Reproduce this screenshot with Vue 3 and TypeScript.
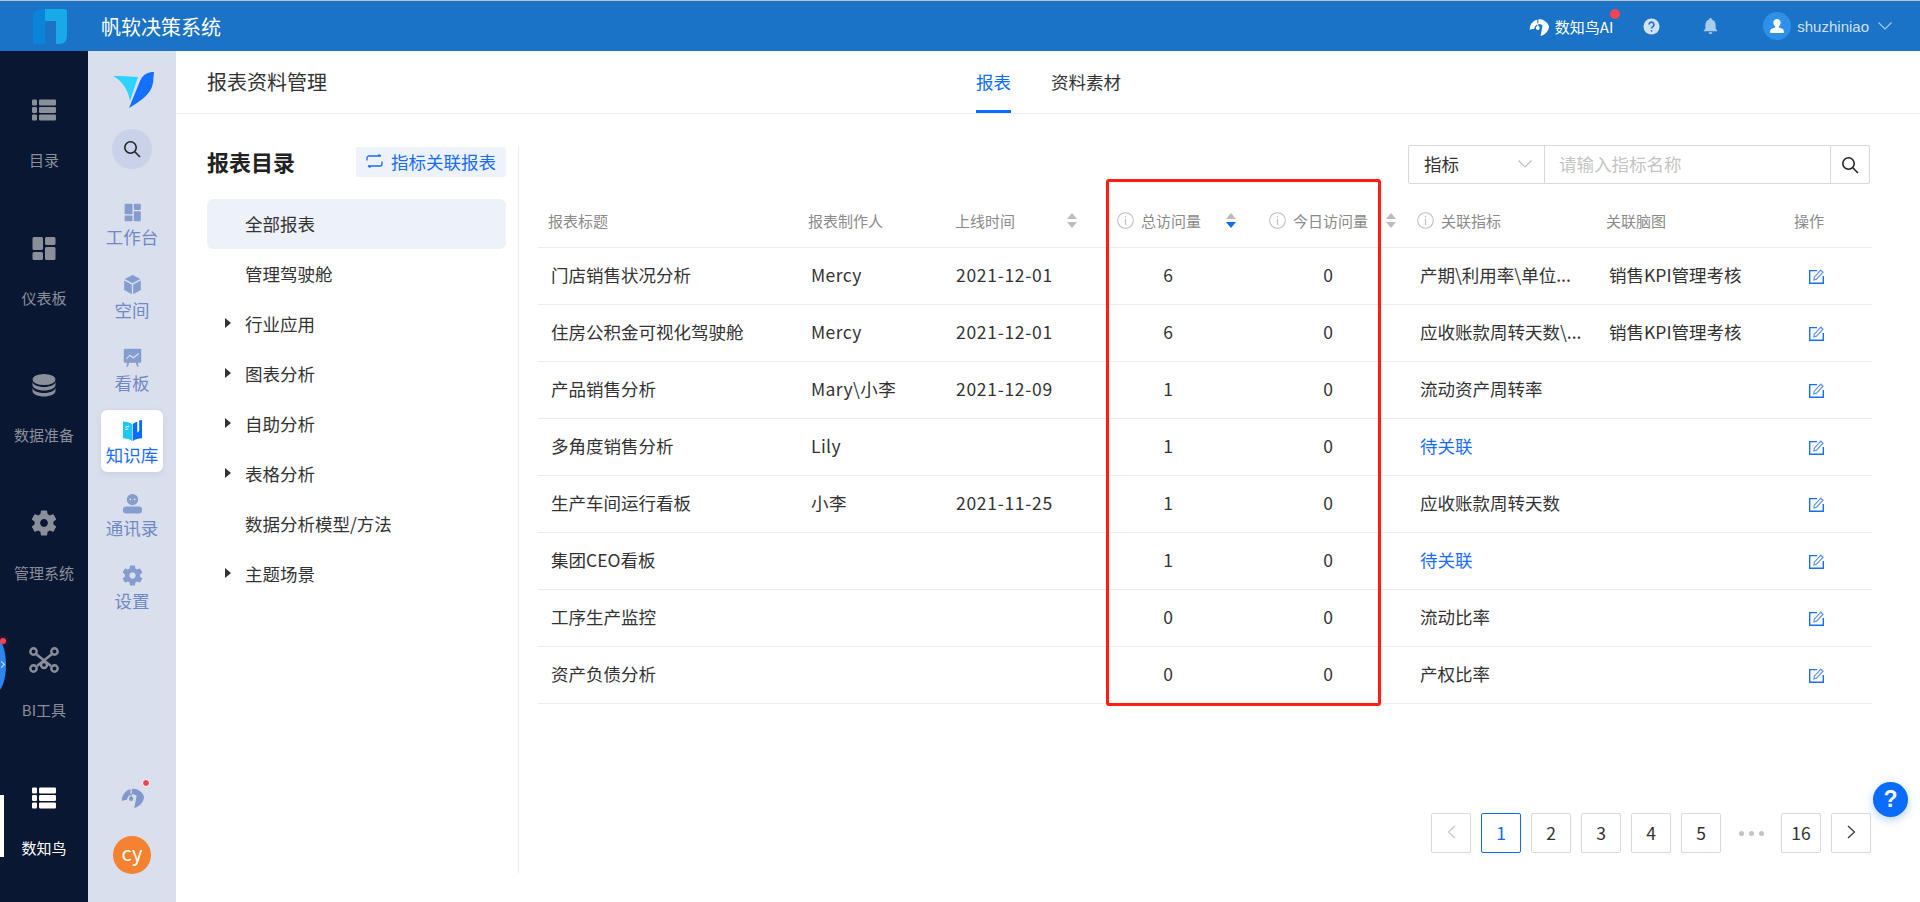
<script setup lang="ts">
function rr(x: number, y: number, w: number, h: number, r: number): string {
  return `M${x + r} ${y}h${w - 2 * r}a${r} ${r} 0 0 1 ${r} ${r}v${h - 2 * r}a${r} ${r} 0 0 1-${r} ${r}h-${w - 2 * r}a${r} ${r} 0 0 1-${r}-${r}v-${h - 2 * r}a${r} ${r} 0 0 1 ${r}-${r}z`
}

const gear =
  'M19.14 12.94c.04-.3.06-.61.06-.94 0-.32-.02-.64-.07-.94l2.03-1.58c.18-.14.23-.41.12-.61l-1.92-3.32c-.12-.22-.37-.29-.59-.22l-2.39.96c-.5-.38-1.03-.7-1.62-.94l-.36-2.54c-.04-.24-.24-.41-.48-.41h-3.84c-.24 0-.43.17-.47.41l-.36 2.54c-.59.24-1.13.57-1.62.94l-2.39-.96c-.22-.08-.47 0-.59.22L2.74 8.87c-.12.21-.08.47.12.61l2.03 1.58c-.05.3-.09.63-.09.94s.02.64.07.94l-2.03 1.58c-.18.14-.23.41-.12.61l1.92 3.32c.12.22.37.29.59.22l2.39-.96c.5.38 1.03.7 1.62.94l.36 2.54c.05.24.24.41.48.41h3.84c.24 0 .44-.17.47-.41l.36-2.54c.59-.24 1.13-.56 1.62-.94l2.39.96c.22.08.47 0 .59-.22l1.92-3.32c.12-.22.07-.47-.12-.61l-2.01-1.58zM12 15c-1.65 0-3-1.35-3-3s1.35-3 3-3 3 1.35 3 3-1.35 3-3 3z'

const listIcon = [1.5, 9, 16.5].map((y) => rr(0, y, 5, 6, 1.2) + rr(7, y, 17, 6, 1.2)).join('')
const dashIcon = rr(0.5, 1, 10.5, 13, 1.5) + rr(0.5, 16, 10.5, 8, 1.5) + rr(13, 1, 10.5, 8, 1.5) + rr(13, 11, 10.5, 13, 1.5)
const dbIcon =
  'M.5 6.5a11.5 5.5 0 1 0 23 0a11.5 5.5 0 1 0-23 0z' +
  'M.5 8.5v3.5c0 3 5.1 5.5 11.5 5.5s11.5-2.5 11.5-5.5v-3.5c0 3-5.1 5.5-11.5 5.5S.5 11.5.5 8.5z' +
  'M.5 14.5v3.5c0 3 5.1 5.5 11.5 5.5s11.5-2.5 11.5-5.5v-3.5c0 3-5.1 5.5-11.5 5.5S.5 17.5.5 14.5z'

const birdMark = 'M.6 14A10 10 0 0 1 20 10c0 5-4 9-8.500 10L13.500 10C12.500 7.500 7 6.500 5 13c-1.500 0-3.500.3-4.400 1z'

const primaryNav = [
  { label: '目录', d: listIcon, vb: '0 0 24 24' },
  { label: '仪表板', d: dashIcon, vb: '0 0 24 24' },
  { label: '数据准备', d: dbIcon, vb: '0 0 24 24' },
  { label: '管理系统', d: gear, vb: '2.300 2 19.400 20', big: true },
  { label: 'BI工具', d: '', vb: '' },
  { label: '数知鸟', d: listIcon, vb: '0 0 24 24', active: true },
]

const secondaryNav = [
  { label: '工作台', d: rr(3, 2, 9, 12, 1.2) + rr(3, 15.5, 9, 6.5, 1.2) + rr(13.5, 2, 8, 7, 1.2) + rr(13.5, 10.5, 8, 11.5, 1.2), vb: '0 0 24 24' },
  { label: '空间', d: 'M12 1l9 4.8-9 4.7-9-4.7zM2.5 7.5l8.7 4.6V23l-8.7-4.8zM21.5 7.5l-8.7 4.6V23l8.7-4.8z', vb: '0 0 24 24' },
  { label: '看板', d: rr(2, 2, 20, 16, 1.5) + 'M5 12.5l4-4 4 3 6-5v1.8l-6 5-4-3-4 4zM6 18h2.2L6.8 22.5H5zM15.8 18H18l1 4.5h-1.8z', vb: '0 0 24 24' },
  { label: '知识库', d: '', vb: '', active: true },
  { label: '通讯录', d: 'M12 1a6.5 6.5 0 1 1 0 13 6.5 6.5 0 0 1 0-13zM9.6 6.3a1 1 0 1 0 0 2 1 1 0 0 0 0-2zM14.4 6.3a1 1 0 1 0 0 2 1 1 0 0 0 0-2z' + rr(1, 15.5, 22, 8, 4), vb: '0 0 24 24' },
  { label: '设置', d: gear, vb: '2 2 20 20' },
]

const catalog = [
  { label: '全部报表', active: true },
  { label: '管理驾驶舱' },
  { label: '行业应用', caret: true },
  { label: '图表分析', caret: true },
  { label: '自助分析', caret: true },
  { label: '表格分析', caret: true },
  { label: '数据分析模型/方法' },
  { label: '主题场景', caret: true },
]

const rows = [
  { title: '门店销售状况分析', owner: 'Mercy', date: '2021-12-01', total: 6, today: 0, metric: '产期\\利用率\\单位...', map: '销售KPI管理考核' },
  { title: '住房公积金可视化驾驶舱', owner: 'Mercy', date: '2021-12-01', total: 6, today: 0, metric: '应收账款周转天数\\...', map: '销售KPI管理考核' },
  { title: '产品销售分析', owner: 'Mary\\小李', date: '2021-12-09', total: 1, today: 0, metric: '流动资产周转率', map: '' },
  { title: '多角度销售分析', owner: 'Lily', date: '', total: 1, today: 0, metric: '待关联', map: '', pending: true },
  { title: '生产车间运行看板', owner: '小李', date: '2021-11-25', total: 1, today: 0, metric: '应收账款周转天数', map: '' },
  { title: '集团CEO看板', owner: '', date: '', total: 1, today: 0, metric: '待关联', map: '', pending: true },
  { title: '工序生产监控', owner: '', date: '', total: 0, today: 0, metric: '流动比率', map: '' },
  { title: '资产负债分析', owner: '', date: '', total: 0, today: 0, metric: '产权比率', map: '' },
]

const pages = ['1', '2', '3', '4', '5']
</script>

<template>
  <div class="app">
    <header class="topbar">
      <svg class="brand" viewBox="0 0 34 35">
        <path d="M12 0H9C3.500 0 0 3.500 0 9v26h12z" fill="#0a84d8" />
        <path d="M12 0h20a2 2 0 0 1 2 2v25c0 5-3 8-8 8h-3V12H12z" fill="#19a9e8" />
      </svg>
      <span class="brand-name">帆软决策系统</span>
      <div class="top-actions">
        <div class="ai">
          <svg class="ai-icon" viewBox="0 0 20 20">
            <path :d="birdMark" fill="#fff" />
            <circle cx="8.800" cy="12" r="1.900" fill="#fff" />
            <path d="M8.800 7.500V0" stroke="#1a73c7" stroke-width="1.100" />
            <path d="M8.800 12V7.500" stroke="#fff" stroke-width="1" />
          </svg>
          <span>数知鸟AI</span>
          <i class="ai-dot"></i>
        </div>
        <svg class="help" viewBox="0 0 18 18">
          <circle cx="9" cy="9" r="8.500" fill="#cfe2f6" />
          <path d="M6.400 7a2.600 2.600 0 1 1 4 2.200c-.9.6-1.400 1-1.400 2" fill="none" stroke="#1a73c7" stroke-width="1.700" />
          <circle cx="9" cy="13.600" r="1" fill="#1a73c7" />
        </svg>
        <svg class="bell" viewBox="0 0 16 18">
          <path d="M8 0a1.400 1.400 0 0 1 1.400 1.500C12 2.200 13.500 4.500 13.500 7.500v3.500L15.500 14H.5l2-3V7.500C2.500 4.500 4 2.200 6.600 1.500A1.400 1.400 0 0 1 8 0zM6 15h4a2 2 0 0 1-4 0z" fill="#a9cbec" />
        </svg>
        <div class="avatar">
          <svg viewBox="0 0 16 16"><path d="M8 1a3.600 3.600 0 0 1 3.600 3.800c0 1.600-.8 3-1.800 3.700v1c2.500.5 5 1.500 5 3.300V15H1.200v-2.200c0-1.800 2.500-2.800 5-3.300v-1c-1-.7-1.800-2.100-1.800-3.700A3.600 3.600 0 0 1 8 1z" fill="#fff" /></svg>
        </div>
        <span class="username">shuzhiniao</span>
        <svg class="user-chevron" viewBox="0 0 14 8"><path d="M.5.5L7 7l6.500-6.500" fill="none" stroke="#a9cbec" stroke-width="1.100" /></svg>
      </div>
    </header>

    <div class="body">
      <nav class="rail-primary">
        <div class="handle"><i class="handle-chevron"></i></div>
        <i class="handle-dot"></i>
        <a v-for="item in primaryNav" :key="item.label" class="rail-item" :class="{ active: item.active }">
          <i v-if="item.active" class="rail-marker"></i>
          <svg v-if="item.d" class="rail-icon" :class="{ big: item.big }" :viewBox="item.vb"><path :d="item.d" fill="currentColor" fill-rule="evenodd" /></svg>
          <svg v-else class="rail-icon net" viewBox="0 0 30 26" fill="none" stroke="currentColor" stroke-width="2.400">
            <circle cx="4.500" cy="4.500" r="3.200" />
            <circle cx="25.500" cy="4.500" r="3.200" />
            <circle cx="4.500" cy="21.500" r="3.200" />
            <circle cx="25.500" cy="21.500" r="3.200" />
            <circle cx="15" cy="18" r="3" />
            <path d="M7 7l15 12M23 7L8 19" />
          </svg>
          <span>{{ item.label }}</span>
        </a>
      </nav>

      <nav class="rail-secondary">
        <svg class="bird" viewBox="0 0 41 37">
          <path d="M0 5c8 0 18 .5 25 1l-8 24C15 18 9 10 0 5z" fill="#2dd2ff" />
          <path d="M41 1l-1 11c-2 12-14 19-24 25l11-27c3-7 8-9 14-9z" fill="#1670ff" />
        </svg>
        <button class="rail-search" type="button" aria-label="搜索">
          <svg viewBox="0 0 18 18" fill="none" stroke="#222" stroke-width="1.600"><circle cx="7.500" cy="7.500" r="5.700" /><path d="M11.800 11.800L17 17" /></svg>
        </button>
        <div class="side-list">
          <a v-for="item in secondaryNav" :key="item.label" class="side-item" :class="{ active: item.active }">
            <svg v-if="item.active" class="side-icon" viewBox="2 2 20 22">
              <path d="M2 3.500c3.500 0 7 1 9.700 2.700V24C9 22 5.500 21 2 21z" fill="#1dc8f7" />
              <path d="M12.300 6.200C14 5 15.500 4.200 17 3.800V15l2-1.500V2.500l3-.5v19c-3.500 0-7 1-9.700 3z" fill="#0a6cff" />
              <path d="M4.500 9.500l4-1M4.500 12l3-.8" stroke="#fff" stroke-width="1" />
            </svg>
            <svg v-else class="side-icon" :viewBox="item.vb"><path :d="item.d" fill="currentColor" fill-rule="evenodd" /></svg>
            <span>{{ item.label }}</span>
          </a>
        </div>
        <div class="side-ai">
          <svg viewBox="0 0 20 20">
            <path :d="birdMark" fill="#8298cc" />
            <circle cx="8.800" cy="12" r="1.900" fill="#8298cc" />
            <path d="M8.800 7.500V0" stroke="#dadfee" stroke-width="1.100" />
            <path d="M8.800 12V7.500" stroke="#8298cc" stroke-width="1" />
          </svg>
          <i></i>
        </div>
        <div class="side-avatar">cy</div>
      </nav>

      <main class="main">
        <div class="page-head">
          <h1>报表资料管理</h1>
          <div class="tabs">
            <a class="tab active">报表</a>
            <a class="tab">资料素材</a>
          </div>
        </div>

        <div class="content">
          <aside class="catalog">
            <div class="catalog-head">
              <h2>报表目录</h2>
              <button class="link-btn" type="button">
                <svg viewBox="0 0 17 14" fill="none" stroke="#1a6cff" stroke-width="1.300">
                  <path d="M1 6.500V4a2 2 0 0 1 2-2h12M12.500.5L15 2M16 7.500V10a2 2 0 0 1-2 2H2M4.500 13.500L2 12" />
                </svg>
                <span>指标关联报表</span>
              </button>
            </div>
            <ul class="catalog-list">
              <li v-for="item in catalog" :key="item.label" :class="{ active: item.active }">
                <span class="caret-slot"><i v-if="item.caret" class="caret"></i></span>
                {{ item.label }}
              </li>
            </ul>
          </aside>

          <section class="panel">
            <div class="searchbar">
              <div class="search-select">
                <span>指标</span>
                <svg viewBox="0 0 14 8"><path d="M.5.5L7 7l6.500-6.500" fill="none" stroke="#bdbdbd" stroke-width="1.100" /></svg>
              </div>
              <div class="search-input">请输入指标名称</div>
              <button class="search-btn" type="button" aria-label="搜索">
                <svg viewBox="0 0 18 18" fill="none" stroke="#222" stroke-width="1.600"><circle cx="7.500" cy="7.500" r="5.700" /><path d="M11.800 11.800L17 17" /></svg>
              </button>
            </div>

            <div class="table">
              <div class="row head">
                <div class="cell h-title">报表标题</div>
                <div class="cell h-owner">报表制作人</div>
                <div class="cell h-date">
                  上线时间
                  <span class="sort s-date"><i class="up"></i><i class="down"></i></span>
                </div>
                <div class="cell h-total">
                  <svg class="info" viewBox="0 0 17 17"><circle cx="8.500" cy="8.500" r="7.800" /><path d="M8.500 4v1.600M8.500 7v6" /></svg>
                  总访问量
                  <span class="sort s-total"><i class="up"></i><i class="down on"></i></span>
                </div>
                <div class="cell h-today">
                  <svg class="info" viewBox="0 0 17 17"><circle cx="8.500" cy="8.500" r="7.800" /><path d="M8.500 4v1.600M8.500 7v6" /></svg>
                  今日访问量
                  <span class="sort s-today"><i class="up"></i><i class="down"></i></span>
                </div>
                <div class="cell h-metric">
                  <svg class="info" viewBox="0 0 17 17"><circle cx="8.500" cy="8.500" r="7.800" /><path d="M8.500 4v1.600M8.500 7v6" /></svg>
                  关联指标
                </div>
                <div class="cell h-map">关联脑图</div>
                <div class="cell h-op">操作</div>
              </div>
              <div v-for="r in rows" :key="r.title" class="row">
                <div class="cell c-title">{{ r.title }}</div>
                <div class="cell c-owner">{{ r.owner }}</div>
                <div class="cell c-date">{{ r.date }}</div>
                <div class="cell c-total">{{ r.total }}</div>
                <div class="cell c-today">{{ r.today }}</div>
                <div class="cell c-metric" :class="{ pending: r.pending }">{{ r.metric }}</div>
                <div class="cell c-map">{{ r.map }}</div>
                <div class="cell c-op">
                  <svg class="edit" viewBox="0 0 15 15" fill="none">
                    <path d="M8 1.600H.7v12.700h13.600V7" stroke="#1470f5" stroke-width="1.400" />
                    <path d="M4.800 11l.5-2.800L11.800 1.200l2.200 2-6.500 7z" stroke="#5f93f2" stroke-width="1.200" />
                  </svg>
                </div>
              </div>
              <div class="highlight"></div>
            </div>

            <div class="pager">
              <button class="page" type="button" aria-label="上一页">
                <svg viewBox="0 0 9 14"><path d="M8 1L1.500 7 8 13" fill="none" stroke="#c4c4c4" stroke-width="1.200" /></svg>
              </button>
              <button v-for="(p, i) in pages" :key="p" class="page" :class="{ current: i === 0 }" type="button">{{ p }}</button>
              <span class="dots"><i></i><i></i><i></i></span>
              <button class="page" type="button">16</button>
              <button class="page" type="button" aria-label="下一页">
                <svg viewBox="0 0 9 14"><path d="M1 1l6.500 6L1 13" fill="none" stroke="#333" stroke-width="1.200" /></svg>
              </button>
            </div>
          </section>
        </div>
        <button class="float-help" type="button" aria-label="帮助">?</button>
      </main>
    </div>
  </div>
</template>

<style scoped>
.app {
  width: 1920px;
  height: 902px;
  display: flex;
  flex-direction: column;
  overflow: hidden;
  color: #333;
  font-family: "Noto Sans CJK SC", "Liberation Sans", sans-serif;
}
.topbar {
  height: 51px;
  box-sizing: border-box;
  flex: none;
  display: flex;
  align-items: center;
  background: #1a73c7;
  border-top: 1px solid #b9c2ca;
  color: #fff;
  position: relative;
  z-index: 2;
}
.brand { width: 34px; height: 35px; margin-left: 33px; }
.brand-name { margin-left: 34px; font-size: 20px; }
.top-actions { margin-left: auto; display: flex; align-items: center; padding-right: 28px; }
.ai { display: flex; align-items: center; position: relative; font-size: 15px; }
.ai-icon { width: 20px; height: 20px; margin-right: 6px; }
.ai-dot { position: absolute; right: -7px; top: -7px; width: 10px; height: 10px; border-radius: 50%; background: #fa4350; }
.help { width: 17px; height: 17px; margin-left: 30px; }
.bell { width: 15px; height: 17px; margin-left: 43px; }
.avatar { width: 28px; height: 28px; margin-left: 45px; border-radius: 50%; background: #2f90ea; display: flex; align-items: center; justify-content: center; }
.avatar svg { width: 16px; height: 16px; }
.username { margin-left: 6px; font-size: 15px; color: #cfe0f2; font-family: "Liberation Sans", sans-serif; }
.user-chevron { width: 14px; height: 8px; margin-left: 9px; }

.body { flex: 1; display: flex; min-height: 0; }

.rail-primary {
  width: 88px;
  flex: none;
  box-sizing: border-box;
  padding-top: 41px;
  background: #0a1733;
  position: relative;
  overflow: hidden;
}
.rail-item {
  height: 137.5px;
  display: flex;
  flex-direction: column;
  align-items: center;
  position: relative;
  color: #8a8f9a;
  font-size: 15px;
  line-height: 20px;
}
.rail-item.active { color: #fff; }
.rail-icon { width: 24px; height: 24px; margin: 6px 0 28px; }
.rail-icon.big { width: 26px; height: 26px; margin: 5px 0 27px; }
.rail-icon.net { width: 30px; height: 26px; margin: 5px 0 27px; }
.rail-marker { position: absolute; left: 0; top: 15.500px; width: 4px; height: 62px; background: #fff; }
.handle {
  position: absolute;
  left: -14px;
  top: 587px;
  width: 20px;
  height: 54px;
  border-radius: 50%;
  background: #2d86f0;
}
.handle-chevron {
  position: absolute;
  left: 13px;
  top: 24px;
  width: 4px;
  height: 4px;
  border-top: 1px solid #cfe3ff;
  border-right: 1px solid #cfe3ff;
  transform: rotate(45deg);
}
.handle-dot {
  position: absolute;
  left: 0;
  top: 587px;
  width: 6px;
  height: 6px;
  border-radius: 50%;
  background: #f0434f;
  box-shadow: 0 0 5px rgba(240, 67, 79, 0.5);
}

.rail-secondary {
  width: 88px;
  flex: none;
  box-sizing: border-box;
  padding: 20px 0 28px;
  background: #dadfee;
  display: flex;
  flex-direction: column;
  align-items: center;
}
.bird { width: 41px; height: 37px; margin-left: 2px; flex: none; }
.rail-search {
  width: 40px;
  height: 40px;
  margin-top: 21px;
  flex: none;
  padding: 0;
  border: 0;
  border-radius: 50%;
  background: #c9d2e8;
  display: flex;
  align-items: center;
  justify-content: center;
}
.rail-search svg { width: 18px; height: 18px; }
.side-list { margin-top: 23px; display: flex; flex-direction: column; gap: 10.800px; }
.side-item {
  width: 62px;
  height: 62px;
  padding-top: 8px;
  box-sizing: border-box;
  display: flex;
  flex-direction: column;
  align-items: center;
  border-radius: 6px;
  color: #7088c4;
  font-size: 17.500px;
  line-height: 22px;
}
.side-item.active { background: #fff; color: #1a6cff; box-shadow: 0 2px 6px rgba(120, 135, 180, 0.18); }
.side-icon { width: 21px; height: 21px; margin: 1.500px 0 3.500px; flex: none; color: #859ccf; }
.side-ai { margin-top: auto; position: relative; width: 23px; height: 23px; margin-bottom: 28px; }
.side-ai svg { width: 23px; height: 23px; display: block; }
.side-ai i { position: absolute; right: -6px; top: -6px; width: 6px; height: 6px; border-radius: 50%; background: #f4414e; border: 1px solid #fff; }
.side-avatar {
  width: 38px;
  height: 38px;
  border-radius: 50%;
  background: #f58231;
  color: #fff;
  font-size: 20px;
  line-height: 34px;
  text-align: center;
  flex: none;
}

.main { flex: 1; min-width: 0; position: relative; background: #fff; box-shadow: inset 0 8px 8px -8px rgba(0, 0, 0, 0.08); }
.page-head {
  height: 63px;
  box-sizing: border-box;
  display: flex;
  padding-left: 31px;
  border-bottom: 1px solid #ededed;
}
.page-head h1 { margin: 0; width: 120px; font-size: 20px; font-weight: 400; line-height: 62px; color: #333; }
.tabs { display: flex; gap: 40px; margin-left: 649px; }
.tab { height: 62px; box-sizing: border-box; font-size: 17.500px; line-height: 62px; color: #333; border-bottom: 3px solid transparent; }
.tab.active { color: #0a6cff; border-bottom-color: #0a6cff; }

.content { display: flex; padding-top: 31px; }
.catalog {
  width: 343px;
  height: 728px;
  box-sizing: border-box;
  flex: none;
  padding: 2px 12px 0 31px;
  border-right: 1px solid #ececec;
}
.catalog-head { display: flex; justify-content: space-between; align-items: center; height: 30px; }
.catalog-head h2 { margin: 0 0 2px; font-size: 22px; font-weight: 700; color: #222; line-height: 28px; }
.link-btn {
  width: 150px;
  height: 30px;
  padding: 0 0 2px 10px;
  border: 0;
  border-radius: 2px;
  background: #edf2fb;
  color: #1a6cff;
  font: inherit;
  font-size: 17.500px;
  display: flex;
  align-items: center;
  gap: 8px;
  white-space: nowrap;
}
.link-btn svg { width: 17px; height: 14px; flex: none; }
.catalog-list { list-style: none; margin: 22px 0 0; padding: 0; }
.catalog-list li { height: 50px; box-sizing: border-box; padding-bottom: 2px; display: flex; align-items: center; font-size: 17.500px; color: #333; border-radius: 6px; }
.catalog-list li.active { background: #edf1f8; }
.caret-slot { width: 38px; flex: none; display: flex; justify-content: flex-end; padding-right: 13px; box-sizing: border-box; margin-left: -1px; margin-right: 1px; }
.caret { width: 0; height: 0; border-left: 6px solid #333; border-top: 5px solid transparent; border-bottom: 5px solid transparent; }

.panel { flex: none; width: 1334px; margin-left: 19px; }
.searchbar { display: flex; justify-content: flex-end; height: 39px; margin-right: 2px; }
.search-select,
.search-input,
.search-btn {
  box-sizing: border-box;
  height: 39px;
  border: 1px solid #d9d9d9;
  background: #fff;
  font-size: 17.500px;
  display: flex;
  align-items: center;
}
.search-select { width: 137px; padding: 0 12px 2px 15px; justify-content: space-between; border-radius: 2px 0 0 2px; }
.search-select svg { width: 14px; height: 8px; }
.search-input { width: 287px; padding: 0 0 2px 14px; margin-left: -1px; color: #c4c4c4; }
.search-btn { width: 40px; margin-left: -1px; padding: 0; justify-content: center; border-radius: 0 2px 2px 0; }
.search-btn svg { width: 18px; height: 18px; }

.table { margin-top: 13px; position: relative; }
.row {
  display: grid;
  grid-template-columns: 260px 147px 155px 140px 168px 190px 182px 92px;
  height: 57px;
  box-sizing: border-box;
  border-bottom: 1px solid #ededed;
  align-items: center;
  font-size: 17.500px;
  color: #333;
}
.row.head { height: 51px; font-size: 15px; color: #8a8a8a; }
.cell { white-space: nowrap; padding-bottom: 3px; }
.head .cell { display: flex; align-items: center; }
.h-title { padding-left: 10px; }
.h-owner { padding-left: 10px; }
.h-date { padding-left: 10px; }
.h-total { padding-left: 17px; }
.h-today { padding-left: 29px; }
.h-metric { padding-left: 9px; }
.h-map { padding-left: 8px; }
.h-op { padding-left: 14px; }
.c-title { padding-left: 13px; }
.c-owner { padding-left: 13px; letter-spacing: 0.4px; }
.c-date { padding-left: 11px; letter-spacing: 0.7px; }
.c-total { text-align: center; padding-right: 4px; }
.c-today { text-align: center; padding-left: 8px; }
.c-metric { padding-left: 12px; }
.c-metric.pending { color: #1a6cff; }
.c-map { padding-left: 11px; }
.c-op { padding-left: 29px; padding-bottom: 0; display: flex; align-items: center; }
.edit { width: 15px; height: 15px; }
.info { width: 17px; height: 17px; margin-right: 7px; fill: none; stroke: #bfbfbf; stroke-width: 1.100; flex: none; }
.sort { display: flex; flex-direction: column; gap: 3px; }
.sort i { width: 0; height: 0; border-left: 5px solid transparent; border-right: 5px solid transparent; }
.sort .up { border-bottom: 6px solid #bcbcbc; }
.sort .down { border-top: 6px solid #bcbcbc; }
.sort .down.on { border-top-color: #0a6cff; }
.s-date { margin-left: 52px; }
.s-total { margin-left: 25px; }
.s-today { margin-left: 18px; }
.highlight {
  position: absolute;
  left: 568px;
  top: -18px;
  width: 275px;
  height: 527px;
  box-sizing: border-box;
  border: 3px solid #ff1f10;
  border-radius: 3px;
  pointer-events: none;
}

.pager { display: flex; justify-content: flex-end; gap: 10px; margin: 109px 1px 0 0; }
.page {
  width: 40px;
  height: 40px;
  box-sizing: border-box;
  padding: 0 0 2px;
  border: 1px solid #d9d9d9;
  border-radius: 2px;
  background: #fff;
  color: #333;
  font: inherit;
  font-size: 17.500px;
  display: flex;
  align-items: center;
  justify-content: center;
}
.page svg { width: 9px; height: 14px; }
.page.current { border-color: #0a6cff; color: #0a6cff; }
.dots { width: 40px; display: flex; align-items: center; justify-content: center; gap: 5px; }
.dots i { width: 5px; height: 5px; border-radius: 50%; background: #c4c4c4; }

.float-help {
  position: absolute;
  left: 1697px;
  top: 731px;
  width: 35px;
  height: 35px;
  padding: 0;
  border: 0;
  border-radius: 50%;
  background: #0a6cff;
  color: #fff;
  font-family: "Liberation Sans", sans-serif;
  font-size: 23px;
  font-weight: 700;
  line-height: 35px;
  text-align: center;
  box-shadow: 0 3px 10px rgba(10, 108, 255, 0.3);
}
</style>

<style>
html, body { margin: 0; padding: 0; overflow: hidden; background: #fff; }
</style>
